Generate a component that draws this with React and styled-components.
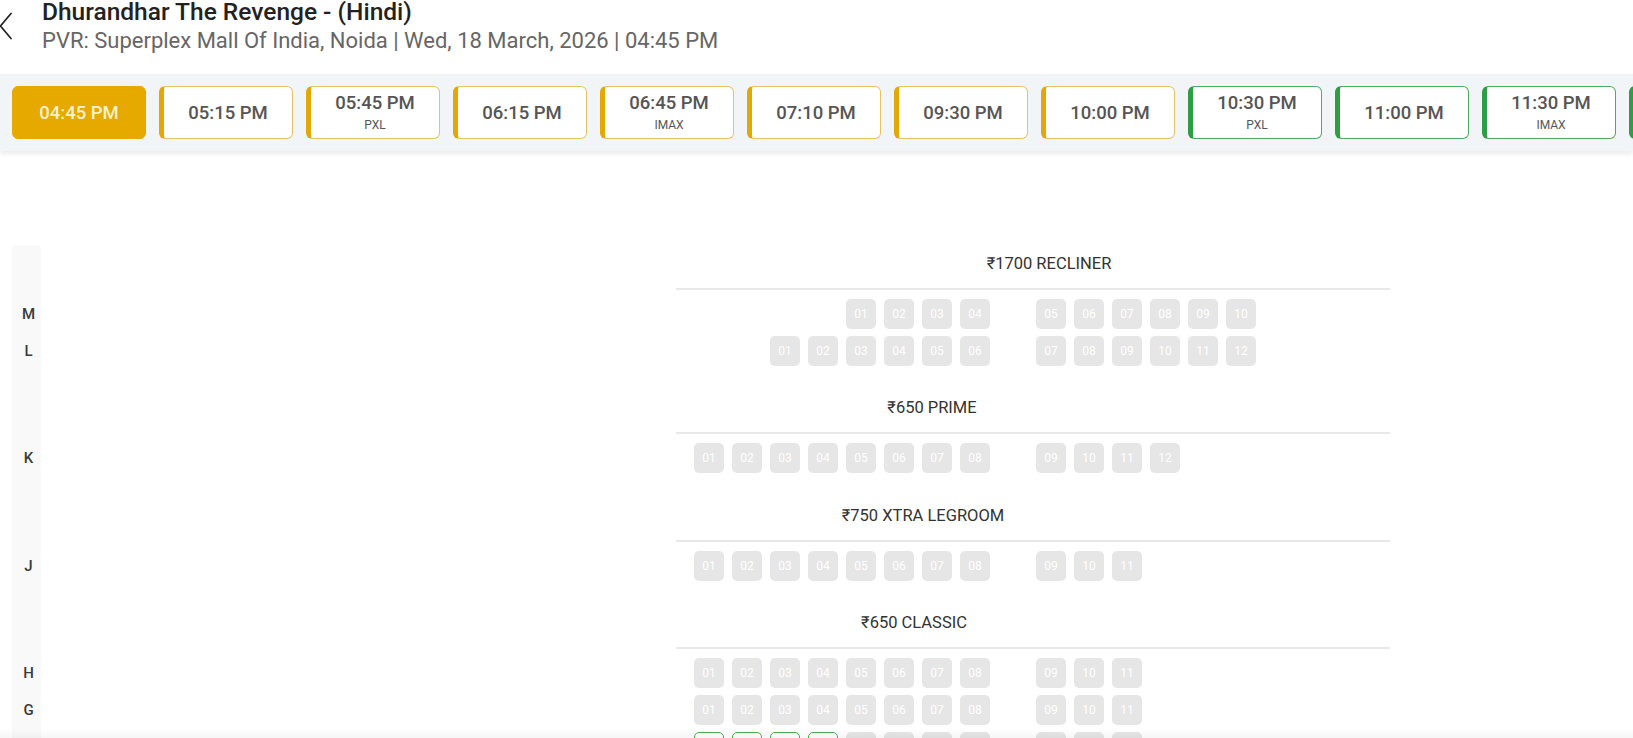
import React from 'react';
import styled, { createGlobalStyle, css } from 'styled-components';

const Global = createGlobalStyle`
  html, body { margin: 0; padding: 0; background: #fff; }
  body {
    font-family: Roboto, "Noto Sans", "Liberation Sans", Arial, sans-serif;
    color: #222;
    overflow: hidden;
  }
`;

const Page = styled.div`
  width: 100%;
`;

const Header = styled.header`
  height: 74px;
  box-sizing: border-box;
  padding-top: 1px;
  display: flex;
  align-items: flex-start;
`;

const BackButton = styled.button`
  border: 0;
  background: none;
  padding: 0;
  margin: 11px 0 0 -1px;
  width: 13px;
  height: 28px;
  display: flex;
  cursor: pointer;
  color: #222;
`;

const TitleBlock = styled.div`
  margin-left: 30px;
  display: flex;
  flex-direction: column;
  gap: 7px;
  white-space: nowrap;
`;

const Title = styled.h1`
  margin: 0;
  font-size: 24.5px;
  line-height: 21px;
  font-weight: 500;
  color: #222;
`;

const Subtitle = styled.div`
  font-size: 22px;
  line-height: 24px;
  color: #666;
`;

const ShowBar = styled.nav`
  background: #f2f5f8;
  padding: 12px;
  display: flex;
  gap: 13px;
  overflow: hidden;
  box-shadow: 0 3px 5px rgba(0, 0, 0, 0.08);
  position: relative;
  z-index: 1;
`;

const tones = {
  gold: { main: '#e3a806', thin: '#e6c466' },
  green: { main: '#2e9e45', thin: '#52a862' },
};

const ShowButton = styled.button`
  flex: 0 0 134px;
  height: 53px;
  box-sizing: border-box;
  border-radius: 6px;
  border: 1px solid ${(p) => tones[p.$tone].thin};
  border-left: 5px solid ${(p) => tones[p.$tone].main};
  background: #fff;
  padding: 0;
  display: flex;
  flex-direction: column;
  align-items: center;
  justify-content: center;
  gap: 5px;
  font-family: inherit;
  cursor: pointer;
  ${(p) =>
    p.$active &&
    css`
      background: #e5a900;
      border: 1px solid #e5a900;
      border-radius: 6px;
    `}
`;

const ShowTime = styled.span`
  font-size: 18.5px;
  line-height: 20px;
  font-weight: 500;
  color: ${(p) => (p.$active ? '#fcf0cf' : '#555')};
`;

const ShowTag = styled.span`
  font-size: 12px;
  line-height: 14px;
  color: #555;
`;

const SeatMap = styled.section`
  margin: 94px 0 0 12px;
  display: grid;
  grid-template-columns: 29px auto;
  justify-content: start;
`;

const LabelCell = styled.div`
  background: #f9f9f9;
  font-size: 15px;
  font-weight: 500;
  color: #3a3a3a;
  line-height: 30px;
  text-align: center;
  padding-left: 4px;
  ${(p) => p.$first && css`border-radius: 4px 4px 0 0;`}
`;

const HeadCell = styled.div`
  padding: ${(p) => (p.$first ? '8.5px' : '25.5px')} 0 0 635px;
`;

const HeadInner = styled.div`
  width: 714px;
`;

const Heading = styled.div`
  font-size: 16.5px;
  line-height: 20px;
  color: #333;
  text-align: center;
  white-space: nowrap;
`;

const Rule = styled.div`
  height: 2px;
  background: #e8e8e8;
  margin: 14px 0 9px;
`;

const RowCell = styled.div`
  padding: 0 0 7px 653px;
`;

const SeatGrid = styled.div`
  display: grid;
  grid-template-columns: repeat(15, 30px);
  column-gap: 8px;
  height: 30px;
`;

const Seat = styled.div`
  width: 30px;
  height: 30px;
  box-sizing: border-box;
  border-radius: 5px;
  background: #e6e6e6;
  color: #fff;
  font-size: 12px;
  display: flex;
  align-items: center;
  justify-content: center;
  ${(p) =>
    p.$available &&
    css`
      background: #fff;
      border: 1.5px solid #4caf50;
      color: #4caf50;
    `}
`;

const BottomShade = styled.div`
  position: fixed;
  left: 0;
  right: 0;
  bottom: 0;
  height: 9px;
  background: linear-gradient(to bottom, rgba(0, 0, 0, 0), rgba(0, 0, 0, 0.035));
  pointer-events: none;
`;

const shows = [
  { time: '04:45 PM', tone: 'gold', active: true },
  { time: '05:15 PM', tone: 'gold' },
  { time: '05:45 PM', tag: 'PXL', tone: 'gold' },
  { time: '06:15 PM', tone: 'gold' },
  { time: '06:45 PM', tag: 'IMAX', tone: 'gold' },
  { time: '07:10 PM', tone: 'gold' },
  { time: '09:30 PM', tone: 'gold' },
  { time: '10:00 PM', tone: 'gold' },
  { time: '10:30 PM', tag: 'PXL', tone: 'green' },
  { time: '11:00 PM', tone: 'green' },
  { time: '11:30 PM', tag: 'IMAX', tone: 'green' },
  { time: '11:59 PM', tone: 'green' },
];

const blocks = (specs, available = []) => {
  const cells = Array(15).fill(null);
  specs.forEach(([col, start, count]) => {
    for (let i = 0; i < count; i++) {
      const n = start + i;
      cells[col + i] = { n: String(n).padStart(2, '0'), available: available.includes(n) };
    }
  });
  return cells;
};

const std = () => blocks([[0, 1, 8], [9, 9, 3]]);

const sections = [
  {
    title: '₹1700 RECLINER',
    center: 373,
    rows: [
      { label: 'M', seats: blocks([[4, 1, 4], [9, 5, 6]]) },
      { label: 'L', seats: blocks([[2, 1, 6], [9, 7, 6]]) },
    ],
  },
  {
    title: '₹650 PRIME',
    center: 256,
    rows: [{ label: 'K', seats: blocks([[0, 1, 8], [9, 9, 4]]) }],
  },
  {
    title: '₹750 XTRA LEGROOM',
    center: 247,
    rows: [{ label: 'J', seats: std() }],
  },
  {
    title: '₹650 CLASSIC',
    center: 238,
    rows: [
      { label: 'H', seats: std() },
      { label: 'G', seats: std() },
      { label: 'F', seats: blocks([[0, 1, 8], [9, 9, 3]], [1, 2, 3, 4]) },
    ],
  },
];

const ChevronLeft = () => (
  <svg width="13" height="28" viewBox="0 0 13 28" fill="none">
    <path d="M12 1.5 L1.5 14 L12 26.5" stroke="currentColor" strokeWidth="1.7" strokeLinecap="round" strokeLinejoin="round" />
  </svg>
);

export default function App() {
  return (
    <Page>
      <Global />
      <Header>
        <BackButton aria-label="Back">
          <ChevronLeft />
        </BackButton>
        <TitleBlock>
          <Title>Dhurandhar The Revenge - (Hindi)</Title>
          <Subtitle>PVR: Superplex Mall Of India, Noida | Wed, 18 March, 2026 | 04:45 PM</Subtitle>
        </TitleBlock>
      </Header>

      <ShowBar>
        {shows.map((s) => (
          <ShowButton key={s.time} $tone={s.tone} $active={s.active}>
            <ShowTime $active={s.active}>{s.time}</ShowTime>
            {s.tag && <ShowTag>{s.tag}</ShowTag>}
          </ShowButton>
        ))}
      </ShowBar>

      <SeatMap>
        {sections.map((sec, si) => (
          <React.Fragment key={sec.title}>
            <LabelCell $first={si === 0} />
            <HeadCell $first={si === 0}>
              <HeadInner>
                <Heading style={{ width: sec.center * 2 }}>{sec.title}</Heading>
                <Rule />
              </HeadInner>
            </HeadCell>
            {sec.rows.map((row) => (
              <React.Fragment key={row.label}>
                <LabelCell>{row.label}</LabelCell>
                <RowCell>
                  <SeatGrid>
                    {row.seats.map((seat, i) =>
                      seat ? (
                        <Seat key={i} $available={seat.available}>
                          {seat.available ? '' : seat.n}
                        </Seat>
                      ) : (
                        <span key={i} />
                      )
                    )}
                  </SeatGrid>
                </RowCell>
              </React.Fragment>
            ))}
          </React.Fragment>
        ))}
      </SeatMap>
      <BottomShade />
    </Page>
  );
}
